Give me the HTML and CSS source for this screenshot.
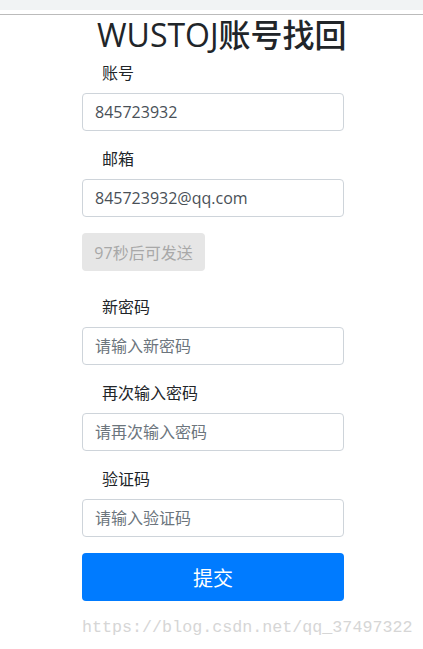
FILE: index.html
```html
<!DOCTYPE html>
<html>
<head>
    <title>WUSTOJ账号找回</title>
    <link rel="stylesheet" href="styles.css">
</head>
<body>
    <div class="topbar"></div>
    <div class="rule"></div>

    <h1 class="title">WUSTOJ账号找回</h1>

    <form class="form">
        <div class="group">
            <label>账号</label>
            <input class="input" type="text" value="845723932">
        </div>
        <div class="group">
            <label>邮箱</label>
            <input class="input" type="text" value="845723932@qq.com">
        </div>
        <button type="button" class="btn btn-send" disabled>97秒后可发送</button>

        <div class="group">
            <label>新密码</label>
            <input class="input" type="password" placeholder="请输入新密码">
        </div>
        <div class="group">
            <label>再次输入密码</label>
            <input class="input" type="password" placeholder="请再次输入密码">
        </div>
        <div class="group">
            <label>验证码</label>
            <input class="input" type="text" placeholder="请输入验证码">
        </div>
        <button type="button" class="btn btn-submit">提交</button>
    </form>

    <div class="watermark">https://blog.csdn.net/qq_37497322</div>
</body>
</html>
```

FILE: styles.css
```css
body { margin: 0; font-family: "Open Sans", "Noto Sans CJK SC", sans-serif; color: #212529; background: #fff; }
.topbar { height: 10px; background: #f1f3f4; }
.rule { height: 1px; margin-top: 4px; background: #bbb; }
.title { margin: 0 0 8px; padding-left: 97px; font-size: 32px; font-weight: 500; line-height: 40px; height: 38px; color: #212529; }
.form { margin-left: 82px; width: 262px; }
.group { margin-bottom: 16px; }
.group label { display: block; padding-left: 20px; margin-bottom: 8px; font-size: 16px; line-height: 24px; }
.input { display: block; box-sizing: border-box; width: 100%; height: 38px; padding: 6px 12px; font: inherit; font-size: 16px; color: #495057; border: 1px solid #ced4da; border-radius: 4px; background: #fff; }
.input::placeholder { color: #6c757d; }
.btn { display: block; box-sizing: border-box; border: 0; border-radius: 4px; font-family: inherit; }
.btn-send { width: 123px; height: 38px; margin-bottom: 24px; background: #e6e6e6; color: #a8a8a8; font-size: 16px; }
.btn-submit { width: 100%; height: 48px; background: #007bff; color: #fff; font-size: 20px; }
.watermark { margin: 17px 0 0 82px; font-family: "Liberation Mono", monospace; font-size: 16.7px; color: #d6d6d6; }
```
